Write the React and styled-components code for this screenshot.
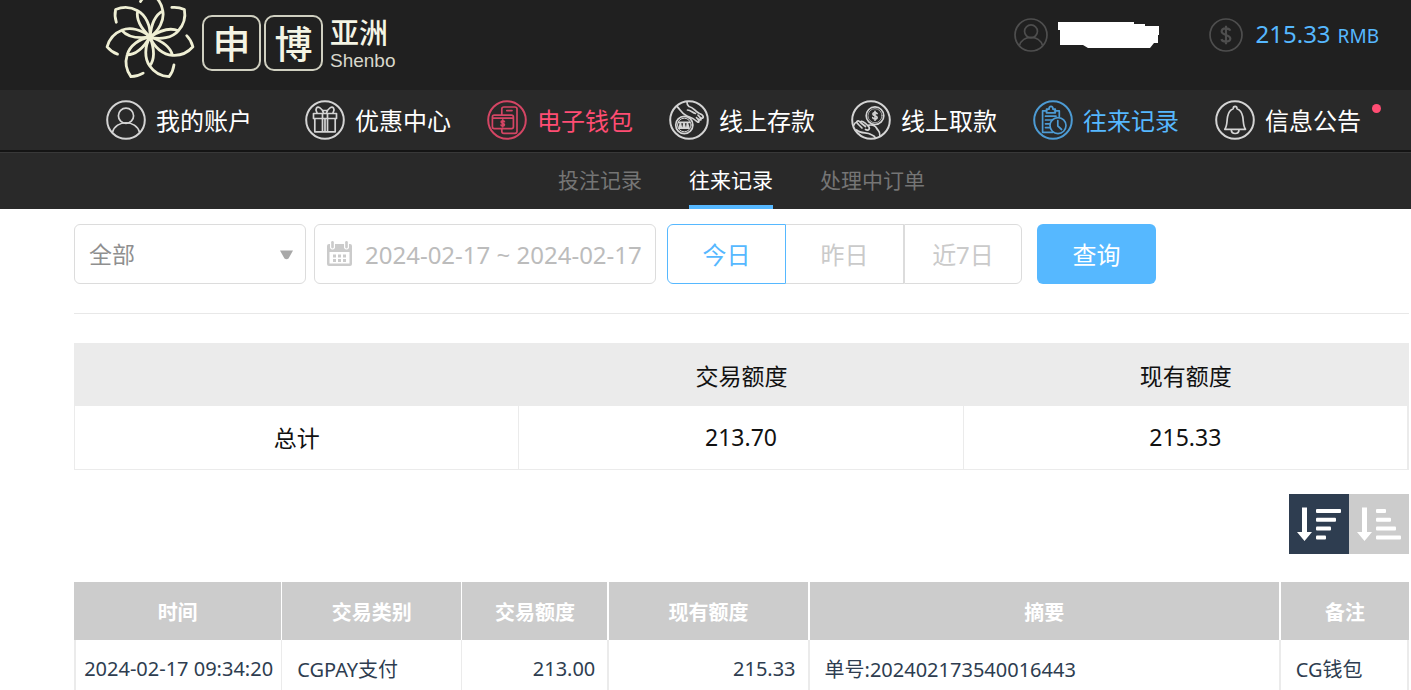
import React, { useState } from "react";
import styled, { createGlobalStyle, css } from "styled-components";

const BLUE = "#56b8ff";
const PINK = "#ff4d73";

const GlobalStyle = createGlobalStyle`
  * { box-sizing: border-box; }
  body { margin: 0; background: #fff; }
  body, button, input, select {
    font-family: "Noto Sans", "Noto Sans CJK SC", sans-serif;
  }
`;

const Page = styled.div`
  height: 100vh;
  overflow-y: auto;
  scrollbar-width: none;
  color: #111;
`;

/* ---------- top bar ---------- */

const TopBar = styled.header`
  display: flex;
  align-items: flex-start;
  justify-content: space-between;
  height: 90px;
  padding: 0 32px 0 105px;
  background: #202020;
  overflow: hidden;
`;

const Logo = styled.a`
  display: flex;
  gap: 7px;
  color: #f4f4e4;
  text-decoration: none;
`;

const Flower = styled.svg`
  width: 90px;
  height: 82px;
  fill: none;
  stroke: #efefd4;
  stroke-width: 2.8;
  stroke-linecap: round;
  stroke-linejoin: round;
`;

const Seals = styled.span`
  display: flex;
  gap: 3px;
  padding-top: 15px;
`;

const Seal = styled.span`
  display: flex;
  align-items: center;
  justify-content: center;
  width: 59px;
  height: 56px;
  border: 2px solid #cfcfc0;
  border-radius: 10px;
  font-size: 38px;
  line-height: 38px;
  font-weight: 500;
`;

const LogoText = styled.span`
  display: flex;
  flex-direction: column;
  padding-top: 18px;
`;

const Region = styled.span`
  font-family: "Liberation Sans", "Noto Sans CJK SC", sans-serif;
  font-size: 29px;
  line-height: 32px;
  font-weight: 500;
`;

const Latin = styled.span`
  font-family: "Liberation Sans", sans-serif;
  font-size: 19px;
  line-height: 22px;
  color: #d8d8cc;
`;

const Account = styled.div`
  display: flex;
  align-items: center;
  height: 70px;
`;

const AccountIcon = styled.svg`
  width: 34px;
  height: 34px;
  fill: none;
  stroke: #4e4e4e;
  stroke-width: 2;
`;

const Redaction = styled.svg`
  width: 102px;
  height: 26px;
  margin: 0 49px 0 10px;
  fill: #fff;
`;

const Balance = styled.span`
  margin-left: 13px;
  color: ${BLUE};
  font-size: 24px;
  line-height: 34px;
`;

const Currency = styled.span`
  margin-left: 7px;
  font-size: 19px;
`;

/* ---------- navigation ---------- */

const MainNav = styled.nav`
  display: flex;
  align-items: center;
  gap: 36px;
  height: 62px;
  padding-left: 106px;
  background: #292929;
  border-bottom: 2px solid #141414;
`;

const tones = { plain: "#fff", pink: PINK, blue: BLUE };

const NavLink = styled.a`
  position: relative;
  display: flex;
  align-items: center;
  gap: 10px;
  color: ${(p) => tones[p.$tone]};
  font-size: 24px;
  line-height: 36px;
  white-space: nowrap;
  text-decoration: none;
  &:first-child { margin-right: 17px; }
`;

const NavIcon = styled.svg`
  width: 40px;
  height: 40px;
  fill: none;
  stroke: currentColor;
  stroke-width: 1.7;
  stroke-linecap: round;
  stroke-linejoin: round;
  opacity: 0.8;
`;

const NavLabel = styled.span`
  padding-top: 2px;
`;

const Dot = styled.i`
  position: absolute;
  top: 4px;
  right: -20px;
  width: 9px;
  height: 9px;
  border-radius: 50%;
  background: ${PINK};
`;

const SubNav = styled.nav`
  display: flex;
  justify-content: center;
  gap: 47px;
  height: 57px;
  padding: 0 2px 0 74px;
  background: #292929;
  border-top: 1px solid #383838;
`;

const SubLink = styled.a`
  font-size: 21px;
  line-height: 54px;
  height: 56px;
  color: #757575;
  text-decoration: none;
  ${(p) =>
    p.$active &&
    css`
      color: #fff;
      border-bottom: 4px solid ${BLUE};
    `}
`;

/* ---------- filters ---------- */

const Content = styled.main`
  padding: 15px 2px 0 74px;
`;

const Filters = styled.form`
  display: flex;
  padding-bottom: 29px;
  margin-bottom: 29px;
  border-bottom: 1px solid #e8e8e8;
`;

const Field = styled.label`
  position: relative;
  width: ${(p) => p.$width}px;
  height: 60px;
  margin-right: ${(p) => p.$after}px;
`;

const fieldBox = css`
  display: block;
  width: 100%;
  height: 100%;
  border: 1px solid #dcdcdc;
  border-radius: 6px;
  background: #fff;
  appearance: none;
  outline: none;
`;

const TypeSelect = styled.select`
  ${fieldBox}
  padding: 0 40px 0 14px;
  color: #8f8f8f;
  font-size: 23px;
`;

const RangeInput = styled.input`
  ${fieldBox}
  padding: 0 0 0 50px;
  color: #bcbcbc;
  font-size: 24px;
`;

const Caret = styled.svg`
  position: absolute;
  right: 13px;
  top: 26px;
  width: 13px;
  height: 10px;
  fill: #a8a8a8;
  pointer-events: none;
`;

const CalendarIcon = styled.svg`
  position: absolute;
  left: 13px;
  top: 17px;
  width: 25px;
  height: 25px;
  fill: #cbcbcb;
`;

const Segments = styled.div`
  display: flex;
  margin-right: 15px;
`;

const Segment = styled.button`
  width: ${(p) => (p.$active ? 119 : 118)}px;
  height: 60px;
  padding: 0 0 2px;
  border: 1px solid ${(p) => (p.$active ? BLUE : "#dcdcdc")};
  border-left-width: ${(p) => (p.$active ? 1 : 0)}px;
  background: #fff;
  color: ${(p) => (p.$active ? BLUE : "#cacaca")};
  font-size: 24px;
  &:first-child { border-left-width: 1px; border-radius: 6px 0 0 6px; }
  &:last-child { border-left-width: 1px; border-radius: 0 6px 6px 0; }
`;

const Submit = styled.button`
  width: 119px;
  height: 60px;
  padding: 0 0 2px;
  border: 0;
  border-radius: 6px;
  background: ${BLUE};
  color: #fff;
  font-size: 24px;
`;

/* ---------- tables ---------- */

const SummaryTable = styled.table`
  width: 100%;
  table-layout: fixed;
  border-spacing: 0;
  border: 1px solid #ebebeb;
  border-top: 0;
  font-size: 23px;
  text-align: center;
  th {
    height: 63px;
    padding: 1px 0 0;
    background: #ebebeb;
    font-weight: 400;
  }
  td {
    height: 63px;
    padding: 0 0 1px;
    border-right: 1px solid #ebebeb;
  }
`;

const SortBar = styled.div`
  display: flex;
  justify-content: flex-end;
  padding: 24px 0 28px;
`;

const SortButton = styled.button`
  width: 60px;
  height: 60px;
  padding: 0;
  border: 0;
  background: ${(p) => (p.$active ? "#2e3d50" : "#ccc")};
  svg { display: block; width: 60px; height: 60px; fill: #fff; }
`;

const RecordTable = styled.table`
  width: 100%;
  table-layout: fixed;
  border-spacing: 0;
  font-size: 20px;
  color: #2e3d50;
  th {
    height: 58px;
    padding: 0;
    background: #ccc;
    color: #fff;
    font-weight: 700;
    border-right: 1px solid #fff;
  }
  td {
    height: 57px;
    border-right: 1px solid #ebebeb;
    border-bottom: 1px solid #ebebeb;
    white-space: nowrap;
  }
  td:first-child { border-left: 2px solid #ebebeb; }
  th:nth-child(n + 3), td:nth-child(n + 3) { border-right-width: 2px; }
  th:last-child { border-right: 0; }
`;

const Cell = styled.td`
  padding: 0 ${(p) => (p.$align === "right" ? 12 : 0)}px 0
    ${(p) => (p.$align === "left" ? 15 : 0)}px;
  text-align: ${(p) => p.$align};
`;

/* ---------- drawings ---------- */

const Ring = () => <circle cx="20" cy="20" r="18.8" strokeWidth="2" />;

const dollar = (
  <path d="M3 -3 C2 -5.2 -3 -5.2 -3 -2.4 C-3 0.4 3 -0.4 3 2.4 C3 5.2 -2.4 5.2 -3.2 2.8 M0 -6.4 V6.4" />
);

const icons = {
  user: (
    <>
      <circle cx="20" cy="15.7" r="7.6" />
      <path d="M6.4 32.4 C10 19.5 30 19.5 33.6 32.4" />
    </>
  ),
  gift: (
    <>
      <path d="M8.5 13.5 H31.5 V18.5 H8.5 Z M9.8 18.5 V31.8 H30.2 V18.5 M17.5 13.5 V31.8 M22.5 13.5 V31.8 M20 18.5 V31.8" />
      <path d="M18.5 13 C17 8 13 6 11.5 8 C10 10.5 12 12 12 13 M21.5 13 C23 8 27 6 28.5 8 C30 10.5 28 12 28 13 M18.4 10.5 H21.6" />
    </>
  ),
  wallet: (
    <>
      <path d="M14.8 15 V9 Q14.8 7 17 7 H27.8 Q30 7 30 9 V31.2 Q30 33.3 27.8 33.3 H17 Q14.8 33.3 14.8 31.2 V28.6" />
      <rect x="5.4" y="15.2" width="21" height="13.4" rx="1.8" />
      <path d="M5.8 18.2 H26 M19.8 10.6 H25" />
      <g transform="translate(15.8 23.4) scale(.55)" strokeWidth="3">{dollar}</g>
    </>
  ),
  deposit: (
    <>
      <circle cx="15.3" cy="25" r="8.6" />
      <circle cx="15.3" cy="25" r="6.8" strokeWidth="1" />
      <path d="M9.8 22.4 H20.8 M10 28 L11.4 23.5 L12.4 28 M14 28 L15 23.5 L16.2 28 M17.8 28 L18.4 23.5 L19.8 27.6 M10 28.2 H20" />
      <path d="M8 6.5 C11 9 12.5 14 18 16 C21 17.5 24 17.2 28.5 22 C31 23 30 19.8 27.5 17.6 M29 19 C33 21.5 33 19 29 15.2 M31 17.5 C36 20 35 15 30.5 13.5 C25 11 25 7.5 20 6.5 C17.5 4.8 18 3 18 1.5 M18.5 10 C22 10 23 12.5 26.5 13.5" />
    </>
  ),
  withdraw: (
    <>
      <circle cx="24" cy="15.7" r="8.8" />
      <circle cx="24" cy="15.7" r="7" strokeWidth=".7" />
      <g transform="translate(24 15.7) scale(.7)" strokeWidth="2.4">{dollar}</g>
      <path d="M3 25 C4 22 5.5 21.5 7.5 24.5 L11 28 M5.8 22.5 C6 20 8 20.5 10 23 L14.5 26.5 M9.5 22.5 C10 20 13.5 22 16.5 25.3 C21 24.5 24 25 25.5 28 C27 31 29.5 31 28.8 35.5 M14.5 29.5 C18 31.5 20 28 16.5 25.3 M5.5 30 C10 34 16 32 20 34.5 C22.5 35.5 24 36.5 24.5 38" />
    </>
  ),
  records: (
    <>
      <path d="M14 10.8 H9.6 V32.3 H20 M21.5 10.8 H26.3 V16.5 M13.5 12.8 V9.2 H16 C16 5.3 20 5.3 20 9.2 H22.3 V12.8 Z" />
      <path d="M12.5 16.2 H23 M12.5 20 H19.5 M12.5 23.8 H16.5 M12.5 27.6 H16.5" />
      <circle cx="25" cy="25.6" r="8" />
      <path d="M24.8 20.5 V26 L28.6 29.5" />
    </>
  ),
  bell: (
    <path d="M9.8 29.3 H30.5 C28 26 28.6 21.5 27.7 16.5 C26.8 12 24.5 9.7 22 8.7 C22 5.5 18.2 5.5 18.2 8.7 C15.7 9.7 13.5 12 12.6 16.5 C11.7 21.5 12.3 26 9.8 29.3 Z M16.3 29.8 C16.3 34.7 24 34.7 24 29.8" />
  ),
};

const petals = Array.from({ length: 7 }, (_, i) => (i * 360) / 7);

const navItems = [
  ["user", "我的账户", "plain"],
  ["gift", "优惠中心", "plain"],
  ["wallet", "电子钱包", "pink"],
  ["deposit", "线上存款", "plain"],
  ["withdraw", "线上取款", "plain"],
  ["records", "往来记录", "blue"],
  ["bell", "信息公告", "plain", true],
];

const columns = [
  ["时间", "15.6%"],
  ["交易类别", "13.5%"],
  ["交易额度", "11%"],
  ["现有额度", "15%"],
  ["摘要", "35.3%"],
  ["备注", "9.6%"],
];

const barWidths = [25, 20, 15, 10];

function SortGlyph({ widths }) {
  return (
    <svg viewBox="0 0 60 60" aria-hidden="true">
      <path d="M13 13.5 H18 V38 H23 L15.5 47 L8 38 H13 Z" />
      {widths.map((w, i) => (
        <rect key={w} x="27" y={15 + i * 8.8} width={w} height="4" rx="1" />
      ))}
    </svg>
  );
}

export default function App() {
  const [day, setDay] = useState("今日");
  const [order, setOrder] = useState("desc");
  const [range, setRange] = useState("2024-02-17 ~ 2024-02-17");

  return (
    <Page>
      <GlobalStyle />
      <TopBar>
        <Logo href="#home">
          <Flower viewBox="0 0 90 82" aria-hidden="true">
            {petals.map((a) => (
              <g key={a} transform={`translate(45 37) rotate(${a})`}>
                <path d="M-9.5 -35.5 Q-6 -41 0 -44 Q11 -38 12.8 -26 C14.5 -17 9 -6 0 0 C1 -11 5 -22 12.8 -26" />
              </g>
            ))}
          </Flower>
          <Seals>
            <Seal>申</Seal>
            <Seal>博</Seal>
          </Seals>
          <LogoText>
            <Region>亚洲</Region>
            <Latin>Shenbo</Latin>
          </LogoText>
        </Logo>
        <Account>
          <AccountIcon viewBox="0 0 40 40" aria-hidden="true">
            <Ring />
            {icons.user}
          </AccountIcon>
          <Redaction viewBox="0 0 102 26" aria-hidden="true">
            <path d="M0 0 H76 V2 H87 V4 H101 V13 H100 V21 H96 L92 26 H30 L25 23 H2 V8 H0 Z" />
          </Redaction>
          <AccountIcon viewBox="0 0 40 40" aria-hidden="true">
            <Ring />
            <g transform="translate(20 20) scale(1.7)" strokeWidth="1.5">{dollar}</g>
          </AccountIcon>
          <Balance>
            215.33<Currency>RMB</Currency>
          </Balance>
        </Account>
      </TopBar>

      <MainNav>
        {navItems.map(([icon, label, tone, unread]) => (
          <NavLink key={icon} href={`#${icon}`} $tone={tone}>
            <NavIcon viewBox="0 0 40 40" aria-hidden="true">
              <Ring />
              {icons[icon]}
            </NavIcon>
            <NavLabel>{label}</NavLabel>
            {unread && <Dot />}
          </NavLink>
        ))}
      </MainNav>

      <SubNav>
        <SubLink href="#bets">投注记录</SubLink>
        <SubLink href="#history" $active>往来记录</SubLink>
        <SubLink href="#pending">处理中订单</SubLink>
      </SubNav>

      <Content>
        <Filters onSubmit={(e) => e.preventDefault()}>
          <Field $width={232} $after={8}>
            <TypeSelect aria-label="交易类别">
              <option>全部</option>
            </TypeSelect>
            <Caret viewBox="0 0 13 10" aria-hidden="true">
              <path d="M0 0.5 H13 L8.5 8.5 Q6.5 10 4.5 8.5 Z" />
            </Caret>
          </Field>
          <Field $width={342} $after={11}>
            <RangeInput
              aria-label="时间"
              value={range}
              onChange={(e) => setRange(e.target.value)}
            />
            <CalendarIcon viewBox="0 0 25 25" aria-hidden="true">
              <path
                fillRule="evenodd"
                d="M2 3 H3 V7 Q5.5 10 8 7 V3 H17 V7 Q19.5 10 22 7 V3 H23 Q25 3 25 5 V23 Q25 25 23 25 H2 Q0 25 0 23 V5 Q0 3 2 3 Z M2.5 11 V22.5 H22.5 V11 Z"
              />
              <rect x="4.2" y="0" width="2.6" height="7.4" rx="1.3" />
              <rect x="18.2" y="0" width="2.6" height="7.4" rx="1.3" />
              {[13.5, 18].map((y) =>
                [6, 11, 16].map((x) => (
                  <rect key={`${x}-${y}`} x={x} y={y} width="3" height="3" />
                ))
              )}
            </CalendarIcon>
          </Field>
          <Segments>
            {["今日", "昨日", "近7日"].map((d) => (
              <Segment key={d} type="button" $active={d === day} onClick={() => setDay(d)}>
                {d}
              </Segment>
            ))}
          </Segments>
          <Submit type="submit">查询</Submit>
        </Filters>

        <SummaryTable>
          <thead>
            <tr>
              <th aria-label="项目" />
              <th>交易额度</th>
              <th>现有额度</th>
            </tr>
          </thead>
          <tbody>
            <tr>
              <td>总计</td>
              <td>213.70</td>
              <td>215.33</td>
            </tr>
          </tbody>
        </SummaryTable>

        <SortBar>
          <SortButton type="button" aria-label="降序" $active={order === "desc"} onClick={() => setOrder("desc")}>
            <SortGlyph widths={barWidths} />
          </SortButton>
          <SortButton type="button" aria-label="升序" $active={order === "asc"} onClick={() => setOrder("asc")}>
            <SortGlyph widths={[...barWidths].reverse()} />
          </SortButton>
        </SortBar>

        <RecordTable>
          <colgroup>
            {columns.map(([label, width]) => (
              <col key={label} width={width} />
            ))}
          </colgroup>
          <thead>
            <tr>
              {columns.map(([label]) => (
                <th key={label}>{label}</th>
              ))}
            </tr>
          </thead>
          <tbody>
            <tr>
              <Cell $align="center">2024-02-17 09:34:20</Cell>
              <Cell $align="left">CGPAY支付</Cell>
              <Cell $align="right">213.00</Cell>
              <Cell $align="right">215.33</Cell>
              <Cell $align="left">单号:202402173540016443</Cell>
              <Cell $align="left">CG钱包</Cell>
            </tr>
          </tbody>
        </RecordTable>
      </Content>
    </Page>
  );
}
